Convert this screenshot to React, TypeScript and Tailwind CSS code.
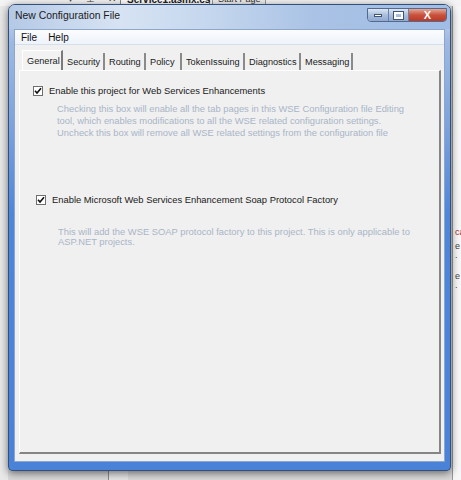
import React from "react";

const tabs: [string, number][] = [
  ["General", 41],
  ["Security", 42],
  ["Routing", 41],
  ["Policy", 36],
  ["TokenIssuing", 63],
  ["Diagnostics", 56],
  ["Messaging", 52],
];

function Check() {
  return (
    <div className="w-[10px] h-[10px] shrink-0 border border-[#6f6f6f] bg-white flex items-center justify-center">
      <svg width="8" height="8" viewBox="0 0 8 8">
        <path d="M1 3.8 L3 6 L7 1.2" fill="none" stroke="#111" strokeWidth="1.6" />
      </svg>
    </div>
  );
}

export default function App() {
  return (
    <div className="relative w-[461px] h-[480px] overflow-hidden bg-[#d9d9d9] font-['Liberation_Sans',Arial,sans-serif]">
      {/* background behind window */}
      <div className="absolute inset-x-0 top-0 h-[6px] bg-[#f4f4f4] overflow-hidden">
        <div className="absolute left-[68px] top-[-6px] text-[10px] leading-[10px] text-[#444] tracking-[5px] whitespace-nowrap">▾ ⊥ ✕</div>
        <div className="absolute left-[120px] top-[-7px] h-[13px] w-[90px] border border-[#888] bg-white text-[10px] font-bold text-[#222] pl-[6px] leading-[11px] whitespace-nowrap">Service1.asmx.cs</div>
        <div className="absolute left-[212px] top-[-7px] h-[13px] w-[54px] border border-[#999] bg-[#eee] text-[9px] text-[#333] pl-[5px] leading-[11px] whitespace-nowrap">Start Page</div>
      </div>
      <div className="absolute right-0 top-[6px] bottom-0 w-[9px] bg-[#f7f7f7] border-l border-[#9a9a9a]">
        <div className="absolute left-[2px] top-[222px] text-[9px] text-[#a03030] leading-none">ca</div>
        <div className="absolute left-[2px] top-[236px] text-[9px] text-[#444] leading-none">e .</div>
        <div className="absolute left-[2px] top-[266px] text-[9px] text-[#444] leading-none">e .</div>
      </div>
      <div className="absolute left-0 top-[6px] bottom-0 w-[8px] bg-[#e9e9e9]" />
      <div className="absolute bottom-0 left-[108px] w-[20px] h-[12px] bg-[#e6e6e6] border-l border-[#8a8a8a]" />

      {/* window */}
      <div className="absolute left-[8px] top-[4px] w-[443px] h-[467px] rounded-t-[7px] rounded-b-[4px] border border-[#33507a] bg-[linear-gradient(180deg,#c8d8ee_0%,#9db9e2_8%,#7ea4dc_25%,#4f86da_45%,#4a82d8_100%)] shadow-[0_2px_8px_rgba(0,0,0,0.55)] flex flex-col">
        {/* title bar */}
        <div className="relative h-[24px] shrink-0 flex items-start rounded-t-[6px] bg-[linear-gradient(90deg,#b4c9e6_0%,#d7e3f3_25%,#c5d7ee_45%,#a9c2e5_70%,#a0bde6_100%)]">
          <span className="ml-[6px] mt-[5px] text-[10.4px] leading-[12px] text-[#1b1b1b]">New Configuration File</span>
          <div className="ml-auto mr-[3px] mt-[3px] flex h-[14px] rounded-b-[4px] border border-[#55698a] overflow-hidden">
            <div className="w-[21px] bg-[linear-gradient(180deg,#dbe6f4,#a9bfdd_50%,#8fa9d2)] border-r border-[#6d81a5] flex items-end justify-center pb-[4px]">
              <div className="w-[8px] h-[3px] bg-white border border-[#44536e]" />
            </div>
            <div className="w-[20px] bg-[linear-gradient(180deg,#dbe6f4,#a9bfdd_50%,#8fa9d2)] border-r border-[#6d81a5] flex items-center justify-center">
              <div className="w-[9px] h-[7px] border-2 border-white outline outline-1 outline-[#44536e]" />
            </div>
            <div className="w-[37px] bg-[linear-gradient(180deg,#e5a796,#c9523d_50%,#b93a27)] flex items-center justify-center">
              <span className="text-white font-bold text-[11px] leading-none">X</span>
            </div>
          </div>
        </div>

        {/* client area */}
        <div className="mx-[5px] mb-[8px] flex-1 flex flex-col bg-[#f0f0f0] border border-[#8ea6c9]">
          {/* menu bar */}
          <div className="h-[15px] shrink-0 flex items-center bg-[linear-gradient(180deg,#fbfcfe,#eef3fa)] border-b border-[#d5dfec] text-[10px] text-[#111]">
            <span className="ml-[6px]">File</span>
            <span className="ml-[11px]">Help</span>
          </div>

          {/* tab strip */}
          <div className="mt-[5px] ml-[7px] h-[20px] shrink-0 flex items-end text-[9.2px] text-[#1a1a1a] whitespace-nowrap">
            {tabs.map(([t, w], i) => (
              <div
                key={t}
                style={{ width: w }}
                className={
                  i === 0
                    ? "h-[20px] pl-[4px] flex items-start pt-[4px] border-t border-l border-white border-r-2 border-r-[#7a7a7a] bg-[#f2f2f2]"
                    : "h-[17px] pl-[4px] flex items-start pt-[3px] border-r-2 border-[#8a8a8a]"
                }
              >
                {t}
              </div>
            ))}
          </div>

          {/* tab panel */}
          <div className="ml-[4px] w-[422px] h-[384px] shrink-0 border-t border-l border-white border-r-2 border-b-2 border-r-[#858585] border-b-[#858585] bg-[#f0f0f0]">
            <div className="mt-[14px] ml-[13px] h-[12px] flex items-center gap-[6px]">
              <Check />
              <span className="text-[9.4px] text-[#1a1a1a] leading-[12px] whitespace-nowrap">Enable this project for Web Services Enhancements</span>
            </div>
            <div className="mt-[6px] ml-[37px] text-[9.4px] leading-[12px] text-[#a9b5c7] whitespace-nowrap">
              Checking this box will enable all the tab pages in this WSE Configuration file Editing
              <br />
              tool, which enables modifications to all the WSE related configuration settings.
              <br />
              Uncheck this box will remove all WSE related settings from the configuration file
            </div>
            <div className="mt-[55px] ml-[16px] h-[12px] flex items-center gap-[6px]">
              <Check />
              <span className="text-[9.4px] text-[#1a1a1a] leading-[12px] whitespace-nowrap">Enable Microsoft Web Services Enhancement Soap Protocol Factory</span>
            </div>
            <div className="mt-[21px] ml-[38px] text-[9.4px] leading-[10px] text-[#a9b5c7] whitespace-nowrap">
              This will add the WSE SOAP protocol factory to this project. This is only applicable to
              <br />
              ASP.NET projects.
            </div>
          </div>
        </div>
      </div>
    </div>
  );
}
